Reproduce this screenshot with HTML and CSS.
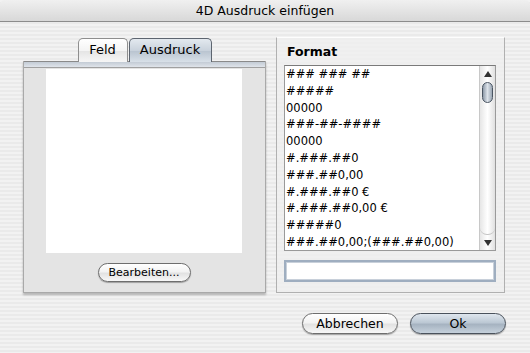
FILE: index.html
```html
<!DOCTYPE html>
<html lang="de">
<head>
    <meta charset="UTF-8">
    <title>4D Ausdruck einfügen</title>
    <link rel="stylesheet" href="styles.css">
</head>
<body>
    <div class="window">
        <div class="titlebar">4D Ausdruck einfügen</div>
        <div class="main">
            <div class="left">
                <div class="tabs">
                    <div class="tab">Feld</div>
                    <div class="tab active">Ausdruck</div>
                </div>
                <div class="pane">
                    <div class="pane-head"></div>
                    <div class="pane-body">
                        <div class="preview"></div>
                        <button class="btn small">Bearbeiten...</button>
                    </div>
                </div>
            </div>
            <div class="group">
                <div class="group-title">Format</div>
                <div class="list">
                    <ul class="items">
                        <li>### ### ##</li>
                        <li>#####</li>
                        <li>00000</li>
                        <li>###-##-####</li>
                        <li>00000</li>
                        <li>#.###.##0</li>
                        <li>###.##0,00</li>
                        <li>#.###.##0 €</li>
                        <li>#.###.##0,00 €</li>
                        <li>#####0</li>
                        <li>###.##0,00;(###.##0,00)</li>
                    </ul>
                    <div class="scrollbar">
                        <div class="arrow up"></div>
                        <div class="track">
                            <div class="thumb"></div>
                        </div>
                        <div class="arrow down"></div>
                    </div>
                </div>
                <input class="field" type="text">
            </div>
        </div>
        <div class="footer">
            <button class="btn">Abbrechen</button>
            <button class="btn default">Ok</button>
        </div>
    </div>
</body>
</html>
```

FILE: styles.css
```css
body {
    margin: 0;
    font-family: "DejaVu Sans", sans-serif;
    font-size: 12.5px;
    color: #000;
}
.window {
    width: 530px;
    height: 353px;
    background: repeating-linear-gradient(#f2f2f2 0 2px, #eaeaea 2px 4px);
    overflow: hidden;
}
.titlebar {
    height: 21px;
    line-height: 22px;
    text-align: center;
    background: linear-gradient(#f0f0f0, #d8d8d8);
    border-bottom: 1px solid #8c8c8c;
    border-radius: 5px 5px 0 0;
}
.main {
    display: flex;
    gap: 10px;
    padding: 16px 25px 0 23px;
}
.left {
    width: 243px;
}
.tabs {
    display: flex;
    justify-content: center;
    gap: 1px;
    height: 24px;
    position: relative;
    z-index: 1;
    margin-bottom: -1px;
}
.tab {
    box-sizing: border-box;
    width: 50px;
    height: 24px;
    line-height: 22px;
    font-size: 13px;
    text-align: center;
    border: 1px solid #8e8e8e;
    border-bottom: none;
    border-radius: 5px 5px 0 0;
    background: linear-gradient(#ffffff, #f4f4f4 50%, #e4e4e4 51%, #f6f6f6);
}
.tab.active {
    width: 83px;
    border-color: #5d6570;
    background: linear-gradient(#e3e9ef, #c9d2dc 50%, #b8c3cf 51%, #d8e0e8);
}
.pane {
    height: 232px;
    box-sizing: border-box;
    border: 1px solid #a9a9a9;
    border-top: none;
    background: #e4e4e4;
    box-shadow: 0 2px 2px rgba(0, 0, 0, 0.25);
}
.pane-head {
    height: 5px;
    border-top: 1px solid #8a8a8a;
    border-bottom: 1px solid #a0a0a0;
    background: linear-gradient(#c3cbd5, #dfe4ea);
}
.pane-body {
    display: flex;
    flex-direction: column;
    align-items: center;
    padding: 1px 23px 0 22px;
}
.preview {
    width: 196px;
    height: 184px;
    background: #fff;
    align-self: flex-start;
}
.btn {
    font-family: "DejaVu Sans", sans-serif;
    font-size: 12.5px;
    box-sizing: border-box;
    width: 96px;
    height: 21px;
    padding: 0 0 1px;
    border: 1px solid #6e6e6e;
    border-radius: 11px;
    background: linear-gradient(#ffffff, #f3f3f3 45%, #e2e2e2 55%, #f8f8f8);
    box-shadow: 0 1px 1px rgba(0, 0, 0, 0.3);
    color: #000;
}
.btn.small {
    width: 93px;
    height: 19px;
    margin-top: 10px;
    font-size: 11px;
    border-radius: 10px;
}
.btn.default {
    border-color: #4a525c;
    background: linear-gradient(#dfe6ee, #bcc8d4 45%, #a6b3c1 55%, #c6d1dc);
}
.group {
    width: 229px;
    height: 256px;
    margin-top: -1px;
    box-sizing: border-box;
    border: 1px solid #b0b0b0;
    border-top-color: #fdfdfd;
    background: rgba(240, 240, 240, 0.7);
    padding: 0 8px 0 7px;
}
.group-title {
    font-weight: bold;
    height: 27px;
    line-height: 27px;
    padding: 0 0 0 3px;
}
.list {
    display: flex;
    height: 186px;
    box-sizing: border-box;
    border: 1px solid #9a9a9a;
    border-top-color: #7a7a7a;
    background: #fff;
}
.items {
    flex: 1;
    list-style: none;
    margin: 0;
    padding: 0 0 0 1px;
    font-size: 11.5px;
    line-height: 16.8px;
    overflow: hidden;
}
.scrollbar {
    width: 15px;
    display: flex;
    flex-direction: column;
    border-left: 1px solid #c8c8c8;
    background: linear-gradient(90deg, #e6e6e6, #ffffff 50%, #e0e0e0);
}
.arrow {
    height: 15px;
    display: flex;
    justify-content: center;
    align-items: center;
}
.arrow::after {
    content: "";
    border-left: 4px solid transparent;
    border-right: 4px solid transparent;
}
.arrow.up::after {
    border-bottom: 6px solid #333;
}
.arrow.down::after {
    border-top: 6px solid #333;
}
.track {
    flex: 1;
    padding-top: 1px;
    border-radius: 0 0 7px 7px;
    border-bottom: 1px solid #c4c4c4;
}
.thumb {
    width: 11px;
    height: 21px;
    margin: 0 auto;
    border: 1px solid #4a5562;
    border-radius: 6px;
    background: linear-gradient(90deg, #8e9aa8, #dde3ea 50%, #9aa6b3);
    box-sizing: border-box;
}
.field {
    display: block;
    box-sizing: border-box;
    width: 212px;
    height: 22px;
    margin-top: 9px;
    border: 2px solid #9faec0;
    outline: 1px solid #c8d0da;
    outline-offset: -3px;
    background: #fff;
    padding: 0;
}
.footer {
    display: flex;
    justify-content: flex-end;
    gap: 12px;
    padding: 20px 24px 0 0;
}
```
